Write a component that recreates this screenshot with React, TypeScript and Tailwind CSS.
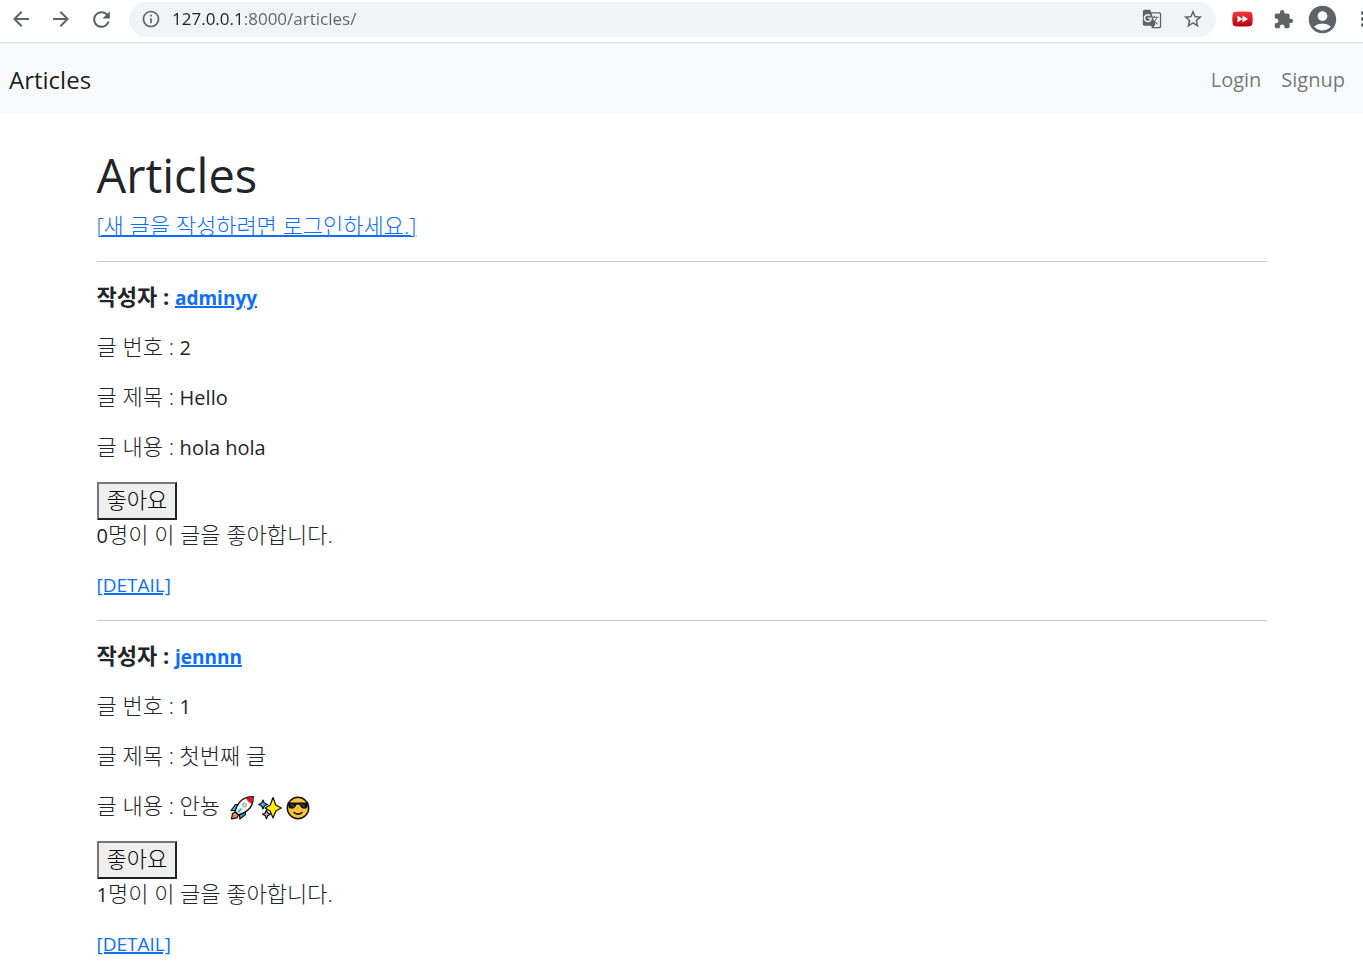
import type { ReactNode } from "react";
import { MdArrowBack, MdArrowForward, MdRefresh, MdInfoOutline, MdGTranslate, MdStarBorder, MdExtension, MdAccountCircle, MdMoreVert } from "react-icons/md";

type Article = { id: number; author: string; title: ReactNode; content: ReactNode; likes: number };

function Rocket() {
  return (
    <svg viewBox="0 0 24 24" className="h-6 w-6" role="img" aria-label="rocket">
      <path d="M1.500 22.800 L2.500 17.500 L6 15.500 L9 18.500 L7 21.800 Z" fill="#f7894a" stroke="#111" strokeWidth="1.200" strokeLinejoin="round" />
      <path d="M9.500 8.500 H5.500 L1 14.500 L6 14.500 Z M15.500 14.500 V18.500 L9.800 23 L9.500 18 Z" fill="#35b5e5" stroke="#111" strokeWidth="1.200" strokeLinejoin="round" />
      <path d="M5 15.500 Q8 4.500 15.500 1.800 Q19 .8 23.200 .8 Q23.200 5 22 8.500 Q19.500 15.500 8.500 19 Z" fill="#f6f6f6" stroke="#111" strokeWidth="1.400" strokeLinejoin="round" />
      <path d="M16 2 Q19.500 1.300 22.700 1.300 Q22.700 4.500 21.800 8 Q18 6.500 16 2 Z" fill="#e81224" />
      <circle cx="14.500" cy="9.200" r="2" fill="#d0d0d0" stroke="#999" strokeWidth="0.800" />
      <path d="M7.800 16.300 L11.500 12.600" stroke="#35b5e5" strokeWidth="2" />
    </svg>
  );
}

function Sparkles() {
  return (
    <svg viewBox="0 0 24 24" className="h-6 w-6" role="img" aria-label="sparkles" stroke="#111" strokeWidth="1.200" strokeLinejoin="round">
      <path d="M5 4 L6.200 7 L9.500 8.500 L6.200 10 L5 13 L3.700 10 L0.800 8.500 L3.700 7 Z" fill="#40c4ee" />
      <path d="M8.500 14 L9.700 17 L12.500 18.300 L9.700 19.600 L8.500 22.700 L7.200 19.600 L4.500 18.300 L7.200 17 Z" fill="#f59ac0" />
      <path d="M15 1.500 L17.800 9 L23.300 12 L17.800 15 L15 22 L12.200 15 L7 12 L12.200 9 Z" fill="#fff100" />
    </svg>
  );
}

function CoolFace() {
  return (
    <svg viewBox="0 0 24 24" className="h-6 w-6" role="img" aria-label="smiling face with sunglasses">
      <circle cx="12" cy="12" r="10.700" fill="#f9c23c" stroke="#111" strokeWidth="1.500" />
      <path d="M1.500 6.500 H22.500 L21 12 Q16 14.500 13.500 8.800 H10.500 Q8 14.500 3 12 Z" fill="#111" />
      <path d="M5 8 L8 11 M15.500 8 L18.500 11" stroke="#777" strokeWidth="1" />
      <path d="M8 16.500 Q12 19.800 16 16.500" fill="none" stroke="#111" strokeWidth="1.500" strokeLinecap="round" />
    </svg>
  );
}

function Latin({ children }: { children: ReactNode }) {
  return <span className="text-xl leading-7 font-normal">{children}</span>;
}

const articles: Article[] = [
  { id: 2, author: "adminyy", title: <Latin>Hello</Latin>, content: <Latin>hola hola</Latin>, likes: 0 },
  {
    id: 1,
    author: "jennnn",
    title: "첫번째 글",
    content: (
      <>
        안뇽{" "}
        <span className="inline-flex gap-1 pl-1 align-middle">
          <Rocket />
          <Sparkles />
          <CoolFace />
        </span>
      </>
    ),
    likes: 1,
  },
];

function BrowserBar() {
  return (
    <div className="flex h-[43px] items-center overflow-hidden border-b border-[#d5d7da] bg-white pb-1 pl-[9px] text-[#5f6368]">
      <div className="flex shrink-0 gap-4">
        <button aria-label="Back"><MdArrowBack size={24} /></button>
        <button aria-label="Forward"><MdArrowForward size={24} /></button>
        <button aria-label="Reload"><MdRefresh size={25} /></button>
      </div>
      <div className="ml-[15px] flex h-[35px] min-w-0 flex-1 items-center rounded-full bg-[#f1f3f4] px-3">
        <MdInfoOutline size={20} className="shrink-0" />
        <input
          aria-label="Address"
          defaultValue="127.0.0.1:8000/articles/"
          className="ml-[11px] h-7 min-w-0 flex-1 bg-linear-to-r from-[#202124] from-[72px] to-[#5f6368] to-[72px] bg-clip-text text-[17px] leading-7 font-normal text-transparent outline-none"
        />
        <button aria-label="Translate"><MdGTranslate size={20} /></button>
        <button aria-label="Bookmark" className="ml-5"><MdStarBorder size={22} /></button>
      </div>
      <button aria-label="Video speed" className="ml-4 shrink-0">
        <svg viewBox="0 0 21 16" className="h-4 w-[21px]">
          <defs>
            <linearGradient id="red" x1="0" y1="0" x2="0" y2="1">
              <stop offset="0" stopColor="#f5393c" />
              <stop offset="1" stopColor="#b8000c" />
            </linearGradient>
          </defs>
          <path d="M3 .8 Q10.500 0 18 .8 Q20 1 20.400 3.500 Q21 8 20.400 12.500 Q20 15 18 15.200 Q10.500 16 3 15.200 Q1 15 .6 12.500 Q0 8 .6 3.500 Q1 1 3 .8Z" fill="url(#red)" />
          <path d="M5.500 4.500 L10.500 8 L5.500 11.500Z M10.500 4.500 L16 8 L10.500 11.500Z" fill="#fff" />
        </svg>
      </button>
      <button aria-label="Extensions" className="ml-5 shrink-0"><MdExtension size={21} /></button>
      <button aria-label="Profile" className="ml-3 shrink-0"><MdAccountCircle size={33} /></button>
      <button aria-label="Menu" className="-mr-3 ml-3 shrink-0"><MdMoreVert size={24} /></button>
    </div>
  );
}

function Row({ label, children }: { label: string; children: ReactNode }) {
  return <p className="mb-5 h-[30px]">{label} : {children}</p>;
}

export default function App() {
  return (
    <div className="min-h-screen bg-white font-['Open_Sans','Noto_Sans_CJK_KR',sans-serif] text-[22px] leading-7 font-light text-[#212529]">
      <BrowserBar />
      <nav className="flex h-[70px] items-center justify-between bg-[#f8f9fa] pt-1 pr-[18px] pl-[9px]">
        <a href="#" className="text-2xl font-normal text-black/90">Articles</a>
        <div className="flex gap-5 text-xl leading-[30px] font-normal text-black/55">
          <a href="#">Login</a>
          <a href="#">Signup</a>
        </div>
      </nav>
      <main className="mx-auto max-w-[1170px] pt-8">
        <h1 className="mb-1.5 text-[47px] leading-[60px] font-normal">Articles</h1>
        <a href="#" className="block h-[30px] w-fit text-[#0d6efd] underline decoration-2">[새 글을 작성하려면 로그인하세요.]</a>
        {articles.map((a) => (
          <article key={a.id} className="mt-5 border-t border-[#c8c9ca] pt-5">
            <p className="mb-5 h-[30px] font-bold">
              작성자 : <a href="#" className="text-[19px] text-[#0d6efd] underline decoration-2">{a.author}</a>
            </p>
            <Row label="글 번호"><Latin>{a.id}</Latin></Row>
            <Row label="글 제목">{a.title}</Row>
            <Row label="글 내용">{a.content}</Row>
            <button className="block h-[38px] border-2 border-t-[#767676] border-r-[#212121] border-b-[#212121] border-l-[#767676] bg-[#efefef] px-2 pb-1 text-black">좋아요</button>
            <p className="mb-5 h-[30px]"><Latin>{a.likes}</Latin>명이 이 글을 좋아합니다.</p>
            <a href="#" className="block w-fit text-[19px] leading-[30px] font-normal text-[#0d6efd] underline decoration-2">[DETAIL]</a>
          </article>
        ))}
      </main>
    </div>
  );
}
